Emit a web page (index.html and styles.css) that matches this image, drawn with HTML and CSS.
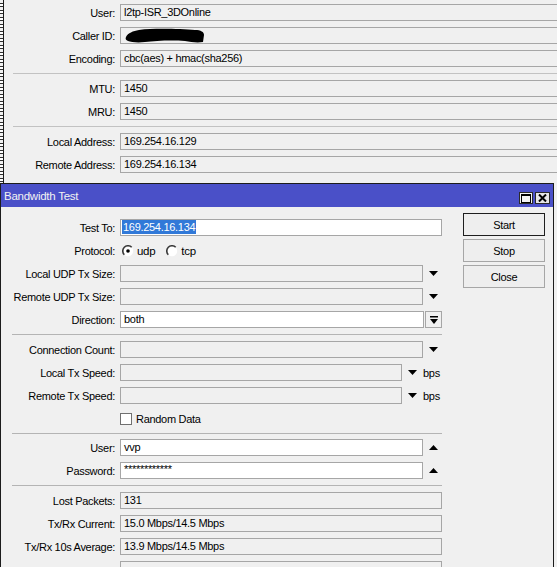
FILE: index.html
```html
<!DOCTYPE html>
<html>
<head>
<meta charset="utf-8">
<link rel="stylesheet" href="styles.css">
</head>
<body>
<div class="bgwin">
  <div class="strip"></div>
  <div class="bgcontent">
    <div class="row"><span class="lbl">User:</span><div class="fld">l2tp-ISR_3DOnline</div></div>
    <div class="row"><span class="lbl">Caller ID:</span><div class="fld redfld"><svg class="redact" width="80" height="16" viewBox="0 0 80 16"><path d="M1 9 C3 5 8 3 14 2 C30 0 55 1 70 2 C76 2 79 4 79 7 L78 14 C72 15 66 14 60 13 C45 12 30 13 20 14 C12 15 6 14 3 13 C1 12 0 11 1 9 Z" fill="#000"/></svg></div></div>
    <div class="row"><span class="lbl">Encoding:</span><div class="fld">cbc(aes) + hmac(sha256)</div></div>
    <div class="sep"></div>
    <div class="row"><span class="lbl">MTU:</span><div class="fld">1450</div></div>
    <div class="row"><span class="lbl">MRU:</span><div class="fld">1450</div></div>
    <div class="sep"></div>
    <div class="row"><span class="lbl">Local Address:</span><div class="fld">169.254.16.129</div></div>
    <div class="row"><span class="lbl">Remote Address:</span><div class="fld">169.254.16.134</div></div>
  </div>
</div>

<div class="dlg">
  <div class="titlebar">
    <span class="title">Bandwidth Test</span>
    <div class="tbtns">
      <span class="tb tbmax"><svg width="10" height="9" viewBox="0 0 10 9"><rect x="0.5" y="0.5" width="9" height="8" fill="none" stroke="#000"/><line x1="0" y1="1.5" x2="10" y2="1.5" stroke="#000"/></svg></span>
      <span class="tb tbclose"><svg width="9" height="8" viewBox="0 0 9 8"><path d="M1 0.5 L8 7.5 M8 0.5 L1 7.5" stroke="#000" stroke-width="2"/></svg></span>
    </div>
  </div>
  <div class="dbody">
    <div class="form">
      <div class="row"><span class="lbl">Test To:</span><div class="fld white w-full sel-fld"><span class="sel">169.254.16.134</span></div></div>
      <div class="row"><span class="lbl">Protocol:</span>
        <div class="radios">
          <svg class="radio" width="12" height="12" viewBox="0 0 12 12"><circle cx="6" cy="6" r="5.2" fill="#fff"/><path d="M2.3 9.7 A5.2 5.2 0 0 1 9.7 2.3" fill="none" stroke="#3a3a3a" stroke-width="1.6"/><circle cx="6" cy="6" r="1.8" fill="#000"/></svg>
          <span class="rtxt">udp</span>
          <svg class="radio r2" width="12" height="12" viewBox="0 0 12 12"><circle cx="6" cy="6" r="5.2" fill="#fff"/><path d="M2.3 9.7 A5.2 5.2 0 0 1 9.7 2.3" fill="none" stroke="#3a3a3a" stroke-width="1.6"/></svg>
          <span class="rtxt">tcp</span>
        </div>
      </div>
      <div class="row"><span class="lbl">Local UDP Tx Size:</span><div class="fld w-dd"></div><span class="arr"><svg width="9" height="5" viewBox="0 0 9 5"><path d="M0 0 H9 L4.5 5 Z" fill="#000"/></svg></span></div>
      <div class="row"><span class="lbl">Remote UDP Tx Size:</span><div class="fld w-dd"></div><span class="arr"><svg width="9" height="5" viewBox="0 0 9 5"><path d="M0 0 H9 L4.5 5 Z" fill="#000"/></svg></span></div>
      <div class="row"><span class="lbl">Direction:</span><div class="fld white w-dd">both</div><span class="ddbtn"><svg width="8" height="8" viewBox="0 0 8 8"><rect x="0" y="0" width="8" height="1.5" fill="#000"/><path d="M0 3 H8 L4 8 Z" fill="#000"/></svg></span></div>
      <div class="sep"></div>
      <div class="row"><span class="lbl">Connection Count:</span><div class="fld w-dd"></div><span class="arr"><svg width="9" height="5" viewBox="0 0 9 5"><path d="M0 0 H9 L4.5 5 Z" fill="#000"/></svg></span></div>
      <div class="row"><span class="lbl">Local Tx Speed:</span><div class="fld w-sp"></div><span class="arr2"><svg width="9" height="5" viewBox="0 0 9 5"><path d="M0 0 H9 L4.5 5 Z" fill="#000"/></svg></span><span class="unit">bps</span></div>
      <div class="row"><span class="lbl">Remote Tx Speed:</span><div class="fld w-sp"></div><span class="arr2"><svg width="9" height="5" viewBox="0 0 9 5"><path d="M0 0 H9 L4.5 5 Z" fill="#000"/></svg></span><span class="unit">bps</span></div>
      <div class="row"><span class="lbl"></span><span class="chk"></span><span class="ctxt">Random Data</span></div>
      <div class="sep sep2"></div>
      <div class="row"><span class="lbl">User:</span><div class="fld white w-dd">vvp</div><span class="arr"><svg width="9" height="5" viewBox="0 0 9 5"><path d="M0 5 H9 L4.5 0 Z" fill="#000"/></svg></span></div>
      <div class="row"><span class="lbl">Password:</span><div class="fld white w-dd pw">************</div><span class="arr"><svg width="9" height="5" viewBox="0 0 9 5"><path d="M0 5 H9 L4.5 0 Z" fill="#000"/></svg></span></div>
      <div class="sep"></div>
      <div class="row"><span class="lbl">Lost Packets:</span><div class="fld w-full">131</div></div>
      <div class="row"><span class="lbl">Tx/Rx Current:</span><div class="fld w-full">15.0 Mbps/14.5 Mbps</div></div>
      <div class="row"><span class="lbl">Tx/Rx 10s Average:</span><div class="fld w-full">13.9 Mbps/14.5 Mbps</div></div>
      <div class="row"><span class="lbl"></span><div class="fld w-full"></div></div>
    </div>
    <div class="btns">
      <button class="btn default">Start</button>
      <button class="btn">Stop</button>
      <button class="btn">Close</button>
    </div>
  </div>
</div>
</body>
</html>
```

FILE: styles.css
```css
html, body {
  margin: 0;
  padding: 0;
}
body {
  background: #f0f0f0;
  font-family: "Liberation Sans", Arial, sans-serif;
  font-size: 11px;
  letter-spacing: -0.3px;
  color: #000;
  width: 557px;
  height: 567px;
  overflow: hidden;
}

/* background window */
.bgwin {
  display: flex;
  height: 183px;
}
.strip {
  width: 3px;
  flex: none;
  border-right: 1px solid #1a1a1a;
  background: repeating-linear-gradient(to bottom, #f0f0f0 0 3px, #303030 3px 4px, #ffffff 4px 6px, #303030 6px 7px);
}
.bgcontent {
  flex: 1;
  padding-top: 4px;
  min-width: 0;
}
.row {
  display: flex;
  align-items: center;
  height: 17px;
  margin-bottom: 6px;
}
.lbl {
  flex: none;
  text-align: right;
  margin-right: 5px;
  white-space: nowrap;
}
.bgwin .lbl {
  width: 111px;
}
.fld {
  box-sizing: border-box;
  height: 17px;
  border: 1px solid #a6a6a6;
  padding: 0 3px;
  line-height: 15px;
  white-space: nowrap;
  overflow: hidden;
  background: #f0f0f0;
}
.bgwin .fld {
  flex: 1;
  margin-right: -20px;
}
.redfld {
  position: relative;
  padding-left: 4px;
}
.redact {
  display: block;
  margin-top: 0;
}
.sep {
  height: 1px;
  background: #b4b4b4;
  margin: 1px 0 6px 9px;
}
.bgwin .sep {
  margin-right: -20px;
  background: #c2c2c2;
}

/* dialog */
.dlg {
  box-sizing: border-box;
  width: 554px;
  height: 400px;
  border: 1px solid #1c1c1c;
  border-bottom: none;
  background: #f0f0f0;
}
.titlebar {
  height: 23px;
  background: #4a50c8;
  display: flex;
  align-items: center;
  padding-left: 3px;
}
.title {
  color: #f2f2f2;
  font-size: 11.5px;
  letter-spacing: -0.25px;
}
.tbtns {
  margin-left: auto;
  margin-right: 3px;
  align-self: flex-start;
  margin-top: 8px;
  display: flex;
  gap: 2px;
}
.tb {
  box-sizing: border-box;
  height: 12px;
  border: 1px solid #2a2a2a;
  display: flex;
  align-items: center;
  justify-content: center;
}
.tbmax {
  width: 14px;
  background: #f4f4f4;
}
.tbclose {
  width: 15px;
  background: #e6e6e6;
}
.dbody {
  display: flex;
  padding-top: 6px;
}
.form {
  width: 441px;
  flex: none;
  padding-top: 6px;
}
.form .lbl {
  width: 114px;
}
.form .sep {
  margin-left: 11px;
}
.form .sep2 {
  margin-top: 2px;
  margin-bottom: 5px;
}
.white {
  background: #ffffff;
}
.w-full {
  width: 322px;
}
.w-dd {
  width: 304px;
}
.w-sp {
  width: 282px;
}
.sel-fld {
  padding-left: 1px;
}
.sel {
  display: inline-block;
  background: #3179d8;
  color: #fff;
  line-height: 14px;
  padding: 0 1px;
  vertical-align: top;
}
.pw {
  line-height: 12px;
}
.arr {
  display: flex;
  width: 18px;
  justify-content: center;
  margin-left: 1px;
}
.arr2 {
  display: flex;
  margin-left: 6px;
}
.unit {
  margin-left: 6px;
}
.ddbtn {
  box-sizing: border-box;
  width: 17px;
  height: 17px;
  margin-left: 1px;
  border: 1px solid #a6a6a6;
  background: #f0f0f0;
  display: flex;
  align-items: center;
  justify-content: center;
}
.radios {
  display: flex;
  align-items: center;
}
.radio {
  display: block;
  margin-left: 2px;
}
.radio.r2 {
  margin-left: 11px;
}
.rtxt {
  margin-left: 3px;
  font-size: 11.5px;
}
.chk {
  box-sizing: border-box;
  width: 12px;
  height: 12px;
  background: #fff;
  border: 1px solid #707070;
  margin-left: 0;
}
.ctxt {
  margin-left: 4px;
}
.btns {
  margin-left: 21px;
  display: flex;
  flex-direction: column;
  gap: 3px;
  width: 82px;
}
.btn {
  box-sizing: border-box;
  width: 82px;
  height: 23px;
  padding: 0;
  font-family: "Liberation Sans", Arial, sans-serif;
  font-size: 11px;
  letter-spacing: -0.3px;
  color: #000;
  background: #eeeeee;
  border: 1px solid #a6a6a6;
  border-radius: 0;
}
.btn.default {
  border-color: #1e1e1e;
}
```
